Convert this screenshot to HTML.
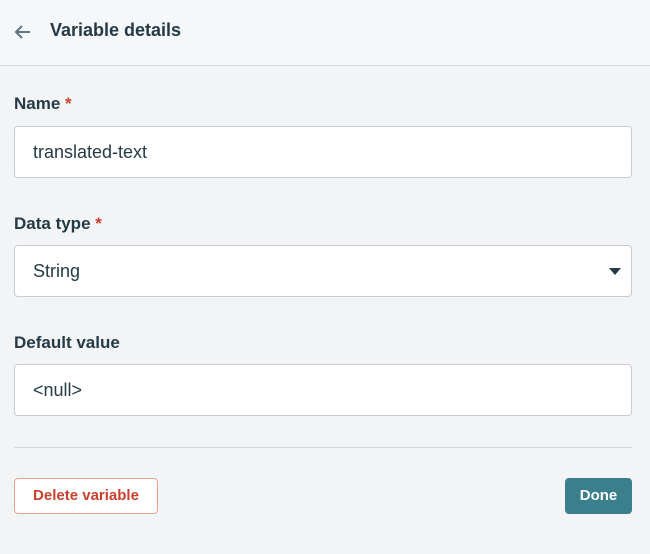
<!DOCTYPE html>
<html><head><style>
body{margin:0;width:650px;height:554px;background:#f3f4f6;font-family:"Liberation Sans",sans-serif;color:#243b47;position:relative;overflow:hidden}
.hdr{position:absolute;left:0;top:0;width:650px;height:65px;background:#f6f7f9;border-bottom:1px solid #d4d7db}
.hdr .t{position:absolute;left:50px;top:20px;font-size:18px;font-weight:bold;color:#243b47}
.lbl{position:absolute;left:14px;font-size:17px;font-weight:bold;color:#243b47}
.lbl span{color:#c9412b}
.inp{position:absolute;left:14px;width:618px;height:52px;background:#fff;border:1px solid #c8ccd1;border-radius:4px;box-sizing:border-box;font-size:18px;padding:15px 18px;color:#243b47}
.div{position:absolute;left:14px;top:447px;width:618px;height:1px;background:#d4d7db}
.del{position:absolute;left:14px;top:478px;width:144px;height:36px;box-sizing:border-box;border:1px solid #e8a092;border-radius:4px;background:#fff;color:#c9412b;font-weight:bold;font-size:15px;text-align:center;line-height:34px}
.done{position:absolute;left:565px;top:478px;width:67px;height:36px;border-radius:4px;background:#3b7f8c;color:#fff;font-weight:bold;font-size:15px;text-align:center;line-height:36px}
</style></head><body>
<div class="hdr">
<svg style="position:absolute;left:14px;top:24px" width="18" height="16" viewBox="0 0 18 16"><path d="M16 8H3M8 2L2 8l6 6" fill="none" stroke="#5f7582" stroke-width="2"/></svg>
<div class="t">Variable details</div></div>
<div class="lbl" style="top:94px">Name <span>*</span></div>
<div class="inp" style="top:126px">translated-text</div>
<div class="lbl" style="top:214px">Data type <span>*</span></div>
<div class="inp" style="top:245px">String<svg style="position:absolute;right:10px;top:22px" width="12" height="7"><path d="M0 0h12L6 7z" fill="#243b47"/></svg></div>
<div class="lbl" style="top:333px">Default value</div>
<div class="inp" style="top:364px">&lt;null&gt;</div>
<div class="div"></div>
<div class="del">Delete variable</div>
<div class="done">Done</div>
</body></html>
